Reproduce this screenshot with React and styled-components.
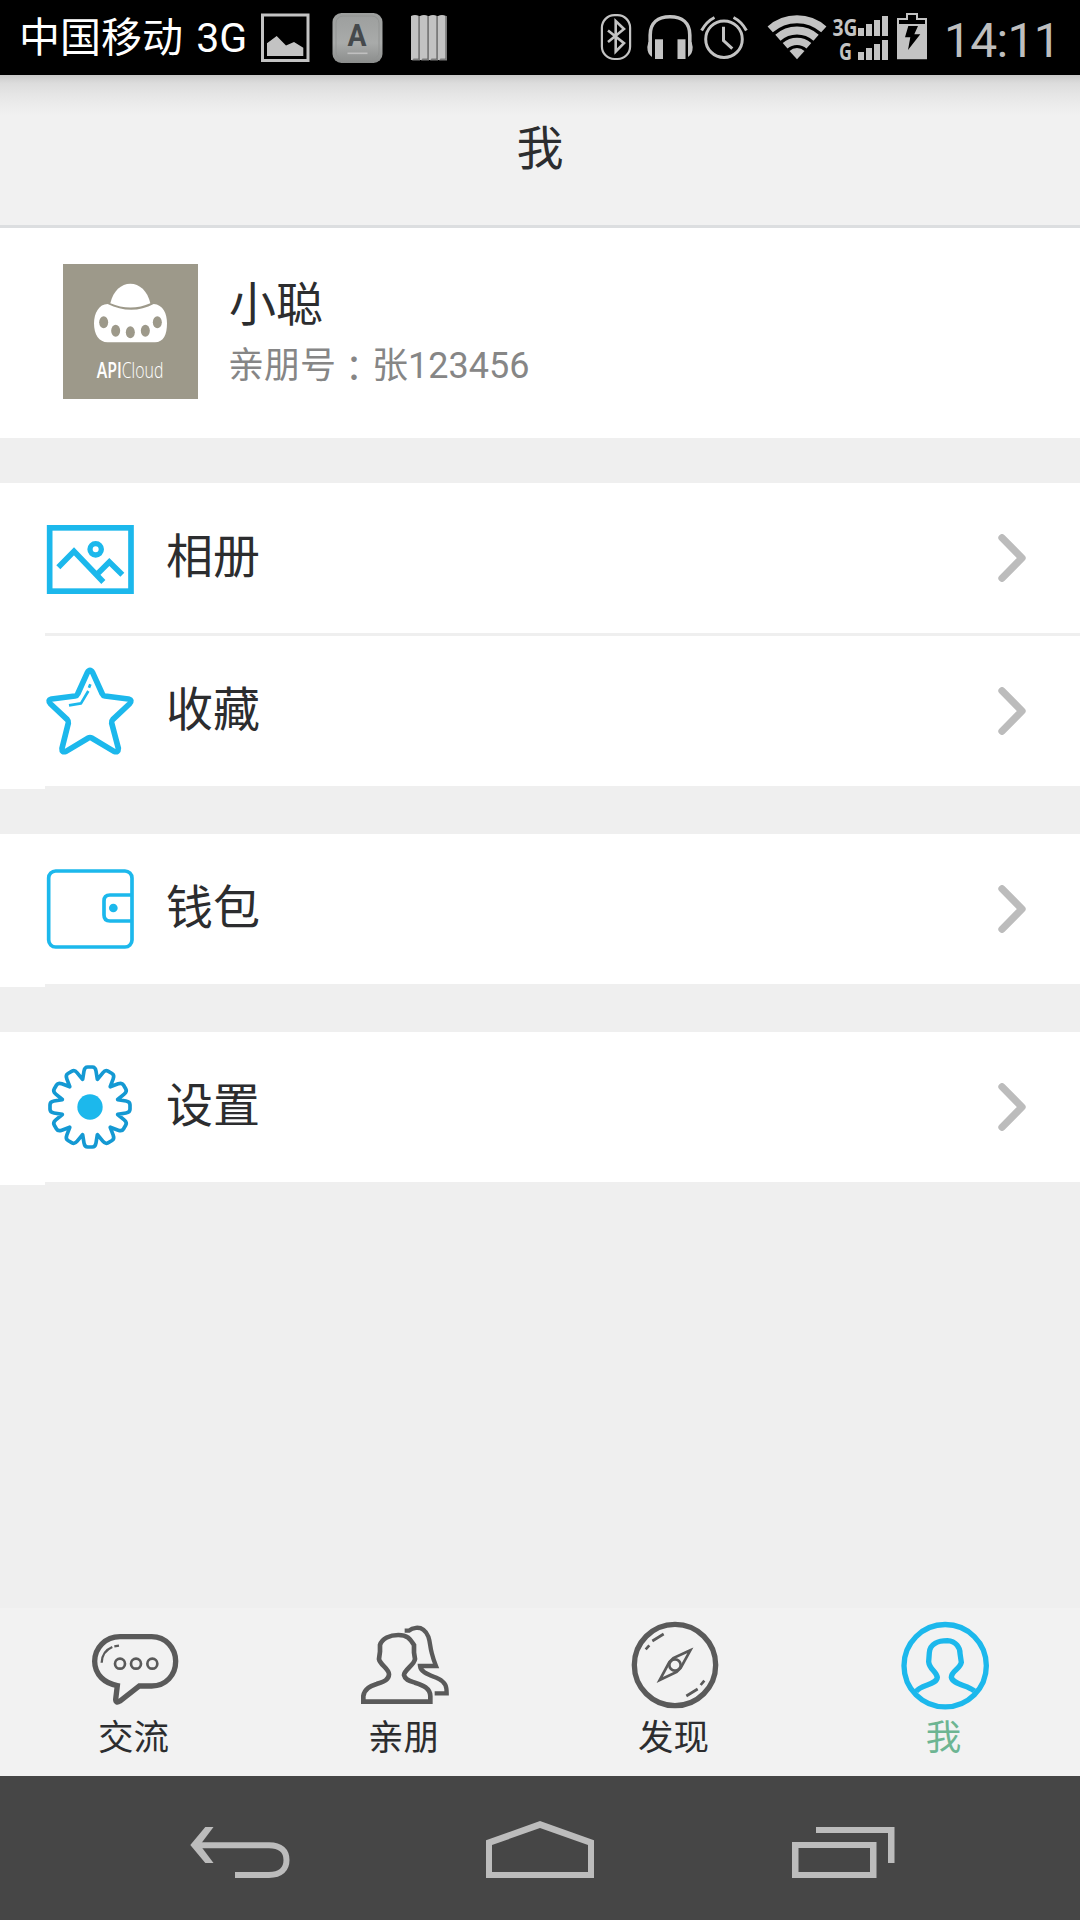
import React from "react";
import styled, { createGlobalStyle } from "styled-components";

const GlobalStyle = createGlobalStyle`
  * {
    box-sizing: border-box;
  }

  body {
    margin: 0;
    background: #efefef;
    font-family: Roboto, "Noto Sans CJK SC", sans-serif;
    color: #2c2d2f;
  }

  svg {
    display: block;
    flex: none;
  }
`

const Screen = styled.div`
  display: flex;
  flex-direction: column;
  width: 1080px;
  height: 1920px;
  background: #efefef;
  overflow: hidden;
`

/* ---------- status bar ---------- */

const StatusBar = styled.div`
  display: flex;
  justify-content: space-between;
  height: 75px;
  padding: 12px 25px 0 19px;
  background: #000;
  color: #fff;
`

const StatusGroup = styled.div`
  display: flex;
  height: 51px;
`

const Carrier = styled.span`
  width: 242px;
  font-size: 41px;
  line-height: 53px;
  word-spacing: 3px;
  white-space: nowrap;
`

const StatusIcon = styled.svg`
  height: 51px;
  margin-right: ${props => props.$gap || 0}px;
  fill: #c3c3c3;
  overflow: visible;
`

const Clock = styled.span`
  width: 111px;
  font-size: 48px;
  line-height: 57px;
  letter-spacing: -0.7px;
  color: #bebebe;
  white-space: nowrap;
`

/* ---------- header ---------- */

const Header = styled.header`
  display: flex;
  align-items: center;
  justify-content: center;
  height: 153px;
  padding-bottom: 3px;
  border-bottom: 3px solid #dcdee0;
  background: linear-gradient(#c9c9c9, #dcdcdc 8px, #e6e6e6 20px, #f1f1f1 40px);
`

const Title = styled.h1`
  margin: 0;
  font-size: 47px;
  font-weight: 400;
  line-height: 60px;
`

/* ---------- profile ---------- */

const Profile = styled.section`
  display: flex;
  height: 210px;
  padding: 36px 63px 0;
  background: #fff;
`

const ProfileText = styled.div`
  display: flex;
  flex-direction: column;
  padding: 9px 0 0 31px;
`

const Name = styled.div`
  font-size: 47px;
  line-height: 64px;
`

const Account = styled.div`
  margin: 1px 0 0 -1px;
  font-size: 36px;
  line-height: 56px;
  color: #868686;
  white-space: nowrap;
`

const Colon = styled.span`
  font-family: "Noto Sans CJK TC", sans-serif;
  line-height: 0;
  vertical-align: -4px;
`

/* ---------- menu ---------- */

const MenuGroup = styled.section`
  margin-top: 45px;
  padding-left: 45px;
  background: #fff;
`

const MenuRow = styled.div`
  display: flex;
  align-items: center;
  height: 153px;
  padding-right: 53px;
  border-bottom: 3px solid #efefef;
`

const MenuIcon = styled.svg`
  width: 90px;
  height: 90px;
  fill: none;
  stroke: #1cb8ec;
`

const MenuLabel = styled.span`
  flex: 1;
  margin-left: 31px;
  font-size: 47px;
  line-height: 64px;
  padding-bottom: 3px;
`

const Chevron = styled.svg`
  width: 29px;
  height: 48px;
  fill: none;
  stroke: #bcbcbc;
  stroke-width: 7.3;
  stroke-linecap: round;
  stroke-linejoin: round;
`

/* ---------- bottom tabs ---------- */

const TabBar = styled.nav`
  display: grid;
  grid-template-columns: repeat(4, 1fr);
  height: 168px;
  margin-top: auto;
  padding-top: 12px;
  background: #f2f2f2;
`

const Tab = styled.div`
  display: flex;
  flex-direction: column;
  align-items: center;
`

const TabIcon = styled.svg`
  width: 90px;
  height: 90px;
  fill: none;
  stroke: ${props => (props.$active ? "#1cb8ec" : "#5a5a5a")};
  stroke-width: 16;
`

const TabLabel = styled.span`
  margin: 3px 3px 0 0;
  font-size: 35.5px;
  line-height: 50px;
  color: ${props => (props.$active ? "#6db592" : "#2c2d2f")};
`

/* ---------- system navigation ---------- */

const NavBar = styled.footer`
  display: flex;
  align-items: center;
  justify-content: space-between;
  height: 144px;
  padding: 0 185px 0 190px;
  background: #464646;
`

const NavIcon = styled.svg`
  height: 60px;
  margin-right: ${props => props.$gap || 0}px;
  fill: #bcbcbc;
`

// twelve rounded teeth around (135, 135)
const gearPath = () => {
  const point = (x, y, turn) => {
    const a = (turn * Math.PI) / 180
    return `${(135 + x * Math.cos(a) - y * Math.sin(a)).toFixed(1)} ${(135 + x * Math.sin(a) + y * Math.cos(a)).toFixed(1)}`
  }
  let d = ""
  for (let i = 0; i < 12; i++) {
    const t = i * 30
    d += `${i === 0 ? "M" : "L"}${point(-22, -83, t)} L${point(-18, -108, t)} `
    d += `Q${point(-16, -120, t)} ${point(-7, -120, t)} L${point(7, -120, t)} `
    d += `Q${point(16, -120, t)} ${point(18, -108, t)} L${point(22, -83, t)} `
  }
  return d + "Z"
}

const AlbumIcon = () => (
  <MenuIcon viewBox="0 0 270 270" strokeWidth="17">
    <rect x="14" y="44.5" width="244" height="190" />
    <path d="M40 163 L87 115 L175 207 M157 183 L193 147 L232 185" />
    <circle cx="152" cy="109" r="17" strokeWidth="16" />
  </MenuIcon>
)

const StarIcon = () => (
  <MenuIcon viewBox="0 0 270 270" strokeWidth="17" strokeLinejoin="round">
    <path d="M127 20 Q135 6 143 20 L172 84 Q174 89 180 90 L250 99 Q264 103 253 114 L203 161 Q199 165 200 171 L220 247 Q220 261 207 256 L140 216 Q135 213 130 216 L63 256 Q50 261 51 247 L70 171 Q71 165 67 161 L17 114 Q6 103 20 99 L90 90 Q96 89 98 84 Z" />
    <path d="M72 118 L108 112 L130 75 M132 65 L136 55" strokeWidth="8" />
  </MenuIcon>
)

const WalletIcon = () => (
  <MenuIcon viewBox="0 0 270 270" strokeWidth="11">
    <rect x="11" y="21" width="250" height="228" rx="21" />
    <path d="M261 93 H195 Q177 93 177 111 V153 Q177 171 195 171 H261" />
    <circle cx="205" cy="132" r="13" fill="#1cb8ec" stroke="none" />
  </MenuIcon>
)

const GearIcon = () => (
  <MenuIcon viewBox="0 0 270 270" strokeWidth="11" strokeLinejoin="round">
    <path d={gearPath()} stroke="#1499d3" />
    <circle cx="135" cy="135" r="38" fill="#1cb8ec" stroke="none" />
  </MenuIcon>
)

const ChatIcon = () => (
  <TabIcon viewBox="0 0 270 270">
    <path d="M90 50 H185 C228 50 257 85 257 124 C257 165 228 198 185 198 H148 L90 243 Q77 251 77 238 L82 197 C45 190 14 165 14 124 C14 85 45 50 90 50 Z" />
    <path d="M35 128 Q36 94 67 81 M73 79 L87 77" strokeWidth="7" />
    <g strokeWidth="8">
      <circle cx="90" cy="131" r="15" />
      <circle cx="138" cy="131" r="15" />
      <circle cx="187" cy="131" r="15" />
    </g>
  </TabIcon>
)

const FriendsIcon = () => (
  <TabIcon viewBox="0 0 270 270">
    <path
      strokeWidth="14"
      d="M10 245 V228 C14 205 32 198 50 192 C72 184 86 180 87 163 C87 145 60 135 57 117 L60 95 V75 C66 55 90 45 115 45 C145 45 152 60 162 75 V98 L165 117 C163 135 132 150 132 165 C135 180 150 183 165 188 C190 196 210 205 211 228 V245 Z"
    />
    <path
      strokeWidth="13"
      d="M134 32 H147 C158 22 178 20 190 29 C212 45 208 75 215 98 C220 118 224 128 228 138 H180 C182 158 210 165 235 176 C258 188 260 200 260 220 H224"
    />
  </TabIcon>
)

const CompassIcon = () => (
  <TabIcon viewBox="0 0 270 270">
    <circle cx="135" cy="135" r="122" />
    <g strokeWidth="8">
      <path d="M181 91 L130 114 L118 126 L89 180 L140 156 L152 144 Z" />
      <circle cx="135" cy="135" r="17" />
      <path d="M67 63 L101 42 M47 88 L58 76 M169 228 L203 207 M212 195 L223 182" />
    </g>
  </TabIcon>
)

const MeIcon = () => (
  <TabIcon viewBox="0 0 270 270" $active>
    <circle cx="135.5" cy="137" r="123.5" />
    <path d="M48 215 C62 192 110 196 112 172 C110 155 88 148 86 125 L88 98 C90 72 115 62 142 62 C168 64 180 82 180 100 L184 127 C180 148 155 152 154 172 C158 194 205 195 223 213" />
  </TabIcon>
)

const Avatar = () => (
  <svg width="135" height="135" viewBox="0 0 405 405">
    <rect width="405" height="405" fill="#9d998a" />
    <g fill="#fff">
      <path d="M142 118 C150 80 175 59 202 59 C229 59 254 80 262 118 C225 135 180 135 142 118 Z" />
      <path d="M134 120 C108 120 93 148 93 178 C93 212 108 235 134 235 H276 C302 235 312 212 312 178 C312 148 300 122 272 120 C230 143 180 143 134 120 Z" />
      <text x="101" y="343" fontFamily="Open Sans" fontWeight="300" fontSize="65" textLength="200" lengthAdjust="spacingAndGlyphs">
        <tspan fontWeight="600">API</tspan>Cloud
      </text>
    </g>
    <g fill="#9d998a">
      <ellipse cx="122" cy="175" rx="13.5" ry="18" />
      <ellipse cx="158" cy="200" rx="13.5" ry="18" />
      <ellipse cx="202" cy="205" rx="13.5" ry="18" />
      <ellipse cx="247" cy="200" rx="13.5" ry="18" />
      <ellipse cx="283" cy="175" rx="13.5" ry="18" />
    </g>
  </svg>
)

const NotificationIcons = () => (
  <>
    <StatusIcon width="49" viewBox="0 0 49 51" $gap={22}>
      <path fillRule="evenodd" d="M0 1.5 H48.5 V50 H0 Z M3 4.5 V47 H45.5 V4.5 Z" />
      <path d="M6 31.3 L15.7 24 L25 33.5 L33 30 L42.3 35.7 V44 H6 Z" />
    </StatusIcon>
    <StatusIcon width="51" viewBox="0 0 51 51" $gap={28}>
      <defs>
        <linearGradient id="key" x1="0" y1="0" x2="0" y2="1">
          <stop offset="0" stopColor="#9c9e9d" />
          <stop offset="0.6" stopColor="#a9abaa" />
          <stop offset="1" stopColor="#8b8d8c" />
        </linearGradient>
      </defs>
      <rect x="0.5" y="1" width="50" height="50" rx="9" fill="url(#key)" />
      <rect x="4" y="4" width="43" height="43" rx="7" fill="none" stroke="#929493" strokeWidth="1" />
      <text x="25" y="34" textAnchor="middle" fontFamily="Roboto" fontWeight="700" fontSize="31" textLength="19" lengthAdjust="spacingAndGlyphs" fill="#45494c">A</text>
      <rect x="15.5" y="40.5" width="20" height="1.6" fill="#c0c0c0" />
    </StatusIcon>
    <StatusIcon width="37" viewBox="0 0 37 51">
      {[0, 9, 18, 27].map(x => (
        <g key={x}>
          <path d={`M${x} 4 Q${x + 4} 2 ${x + 8} 4 V46 L${x + 6} 48 H${x} Z`} />
          <path d={`M${x + 7.2} 4 H${x + 9} V48.5 H${x + 1} L${x + 2.5} 46.5 H${x + 7.2} Z`} fill="#7b7b7b" />
        </g>
      ))}
    </StatusIcon>
  </>
)

const SystemIcons = () => (
  <>
    <StatusIcon width="32" viewBox="0 0 32 51" $gap={15}>
      <g fill="none" stroke="#c3c3c3" strokeWidth="2.6">
        <rect x="1.9" y="3.2" width="28.2" height="43.8" rx="12.5" strokeWidth="2.2" />
        <path d="M8 18.5 L24 31.2 L15.7 39.5 V9 L24 17 L8 30" />
      </g>
    </StatusIcon>
    <StatusIcon width="46" viewBox="0 0 46 51" $gap={7}>
      <path d="M3.2 34 V23 C3.2 11 11 4.8 23 4.8 C35 4.8 42.8 11 42.8 23 V34" fill="none" stroke="#c3c3c3" strokeWidth="3.6" />
      <path d="M1.4 30 L5 32 V45 C2 43 0.3 40 0.3 35 Z M44.6 30 L41 32 V45 C44 43 45.7 40 45.7 35 Z" />
      <rect x="8" y="27.3" width="8" height="19.7" />
      <rect x="30.5" y="27.3" width="8" height="19.7" />
    </StatusIcon>
    <StatusIcon width="48" viewBox="0 0 48 51" $gap={19}>
      <g fill="none" stroke="#c3c3c3" strokeWidth="3">
        <circle cx="24" cy="27.2" r="18.3" />
        <path d="M23.5 14.7 V28.5 L32.3 36.6" />
        <path d="M1.6 18.5 Q6.5 9.5 14.5 5.5 M33.5 5.5 Q41.5 9.5 46.4 18.5" />
      </g>
    </StatusIcon>
    <StatusIcon width="60" viewBox="0 0 60 51" $gap={6}>
      <g fill="none" stroke="#c3c3c3" strokeWidth="7.9">
        <path d="M3.2 17.4 A40.3 40.3 0 0 1 56.8 17.4" />
        <path d="M10.9 25.7 A28.8 28.8 0 0 1 49.1 25.7" />
        <path d="M18.1 33.8 A18 18 0 0 1 41.9 33.8" strokeWidth="7.2" />
      </g>
      <path d="M30 47.3 L22.5 39 A11 11 0 0 1 37.5 39 Z" />
    </StatusIcon>
    <StatusIcon width="56" viewBox="0 0 56 51" $gap={8}>
      <g fontFamily="Open Sans" fontWeight="700" fontSize="23">
        <text x="-0.5" y="24" textLength="25" lengthAdjust="spacingAndGlyphs">3G</text>
        <text x="6" y="48" textLength="13" lengthAdjust="spacingAndGlyphs">G</text>
      </g>
      {[0, 1, 2, 3].map(i => (
        <g key={i}>
          <rect x={25 + i * 8} y={16 - i * 4} width="6" height={8 + i * 4} />
          <rect x={25 + i * 8} y={40 - i * 4} width="6" height={8 + i * 4} />
        </g>
      ))}
    </StatusIcon>
    <StatusIcon width="30" viewBox="0 0 30 51" $gap={17}>
      <path fillRule="evenodd" d="M0 6 H9 V1 H21 V6 H30 V47.2 H0 Z M2 8 V12 H28 V8 H19 V3 H11 V8 Z" />
      <path d="M11.3 14 H21 L17.3 22.3 H23.3 L11 38 L13.3 25.3 H8 Z" fill="#000" />
    </StatusIcon>
  </>
)

const menuGroups = [
  [
    { label: "相册", icon: <AlbumIcon /> },
    { label: "收藏", icon: <StarIcon /> },
  ],
  [{ label: "钱包", icon: <WalletIcon /> }],
  [{ label: "设置", icon: <GearIcon /> }],
]

const tabs = [
  { label: "交流", icon: <ChatIcon /> },
  { label: "亲朋", icon: <FriendsIcon /> },
  { label: "发现", icon: <CompassIcon /> },
  { label: "我", icon: <MeIcon />, active: true },
]

const App = () => {
  return (
    <Screen>
      <GlobalStyle />
      <StatusBar>
        <StatusGroup>
          <Carrier>中国移动 3G</Carrier>
          <NotificationIcons />
        </StatusGroup>
        <StatusGroup>
          <SystemIcons />
          <Clock>14:11</Clock>
        </StatusGroup>
      </StatusBar>

      <Header>
        <Title>我</Title>
      </Header>

      <Profile>
        <Avatar />
        <ProfileText>
          <Name>小聪</Name>
          <Account>亲朋号<Colon lang="zh-TW">：</Colon>张123456</Account>
        </ProfileText>
      </Profile>

      {menuGroups.map((rows, i) => (
        <MenuGroup key={i}>
          {rows.map(row => (
            <MenuRow key={row.label}>
              {row.icon}
              <MenuLabel>{row.label}</MenuLabel>
              <Chevron viewBox="0 0 29 48">
                <path d="M4 3.8 L24 24 L4 44.2" />
              </Chevron>
            </MenuRow>
          ))}
        </MenuGroup>
      ))}

      <TabBar>
        {tabs.map(tab => (
          <Tab key={tab.label}>
            {tab.icon}
            <TabLabel $active={tab.active}>{tab.label}</TabLabel>
          </Tab>
        ))}
      </TabBar>

      <NavBar>
        <NavIcon width="100" viewBox="0 0 100 60">
          <path d="M8 27.2 H79 C91 27.2 96.5 33 96.5 42 C96.5 51 91 57 79 57 H45" fill="none" stroke="#bcbcbc" strokeWidth="6" />
          <path d="M0.3 27 L15.3 9 H23.5 L10 27 L23.5 45 H15.3 Z" />
        </NavIcon>
        <NavIcon width="108" viewBox="0 0 108 60" $gap={2}>
          <path fillRule="evenodd" d="M0 22.3 L54 3 L108 22.3 V60 H0 Z M6 27 V54 H102 V27 L54 10 Z" />
        </NavIcon>
        <NavIcon width="103" viewBox="0 0 103 60">
          <path fillRule="evenodd" d="M0 24 H84.5 V60 H0 Z M6.5 30 V54 H78 V30 Z" />
          <path d="M24 9 H102.5 V45 H96 V15 H24 Z" />
        </NavIcon>
      </NavBar>
    </Screen>
  );
}

export default App;
